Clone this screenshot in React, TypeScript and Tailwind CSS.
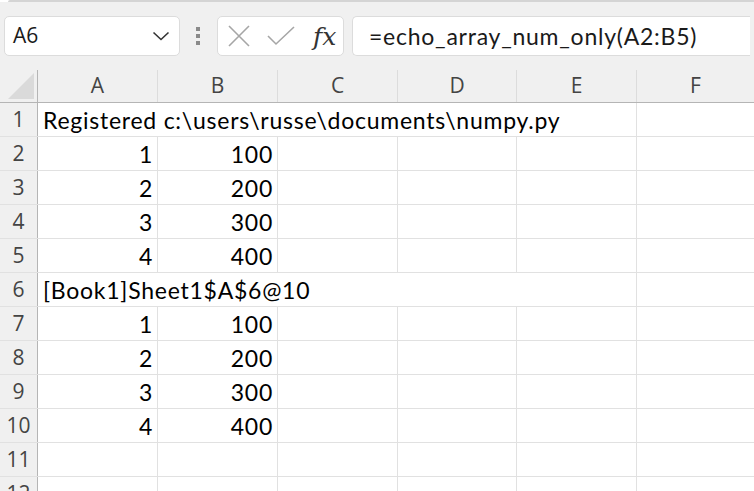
import React from 'react';

const cellFont = { fontFamily: 'Lato, "Open Sans", sans-serif', letterSpacing: '0.75px' };

type Cell = { text: string; align?: 'left' | 'right'; overflow?: boolean };

const rows: Cell[][] = [
  [{ text: 'Registered c:\\users\\russe\\documents\\numpy.py', overflow: true }],
  [{ text: '1', align: 'right' }, { text: '100', align: 'right' }],
  [{ text: '2', align: 'right' }, { text: '200', align: 'right' }],
  [{ text: '3', align: 'right' }, { text: '300', align: 'right' }],
  [{ text: '4', align: 'right' }, { text: '400', align: 'right' }],
  [{ text: '[Book1]Sheet1$A$6@10', overflow: true }],
  [{ text: '1', align: 'right' }, { text: '100', align: 'right' }],
  [{ text: '2', align: 'right' }, { text: '200', align: 'right' }],
  [{ text: '3', align: 'right' }, { text: '300', align: 'right' }],
  [{ text: '4', align: 'right' }, { text: '400', align: 'right' }],
  [],
  [],
];

const columns = ['A', 'B', 'C', 'D', 'E', 'F'];
const colWidths = ['w-[120px]', 'w-[120px]', 'w-[120px]', 'w-[119px]', 'w-[120px]', 'flex-1'];

const FormulaBar: React.FC = () => (
  <div className="flex items-center h-[68px] px-[4px] bg-[#f0f0f0]">
    {/* Name box */}
    <div className="flex items-center justify-between w-[176px] h-[40px] bg-white border border-[#dcdcdc] rounded-[5px] pl-[8px] pr-[8px]">
      <span className="text-[21px] text-[#1a1a1a]" style={{ fontFamily: '"Open Sans", sans-serif' }}>A6</span>
      <svg width="18" height="10" viewBox="0 0 18 10" className="mr-[1px]">
        <path d="M1.5 1.5 L9 8.5 L16.5 1.5" fill="none" stroke="#333" strokeWidth="1.6" />
      </svg>
    </div>
    {/* Separator dots */}
    <div className="flex flex-col gap-[3px] ml-[16px] mr-[17px]">
      <div className="w-[4px] h-[4px] bg-[#8a8a8a]" />
      <div className="w-[4px] h-[4px] bg-[#8a8a8a]" />
      <div className="w-[4px] h-[4px] bg-[#8a8a8a]" />
    </div>
    {/* Buttons */}
    <div className="flex items-center w-[127px] h-[40px] bg-white border border-[#dcdcdc] rounded-[5px] pl-[9px]">
      <svg width="24" height="24" viewBox="0 0 24 24">
        <path d="M2 2 L22 22 M22 2 L2 22" stroke="#a6a6a6" strokeWidth="1.6" fill="none" />
      </svg>
      <svg width="28" height="20" viewBox="0 0 28 20" className="ml-[16px]">
        <path d="M1 10 L9 18 L27 1" stroke="#a6a6a6" strokeWidth="1.6" fill="none" />
      </svg>
      <span
        className="ml-[18px] text-[25px] italic text-[#333] leading-none"
        style={{ fontFamily: '"DejaVu Serif", serif' }}
      >
        fx
      </span>
    </div>
    {/* Formula input */}
    <div className="flex items-center flex-1 h-[40px] ml-[8px] bg-white border border-r-0 border-[#dcdcdc] rounded-l-[5px] pl-[16px]">
      <span className="text-[23px] text-[#1a1a1a]" style={cellFont}>=echo_array_num_only(A2:B5)</span>
    </div>
  </div>
);

export default function App() {
  return (
    <div className="w-[754px] h-[491px] overflow-hidden bg-white select-none">
      <div className="h-[2px] bg-[#d4d4d4] rounded-tl-[6px] ml-[8px]" />
      <FormulaBar />

      {/* Column headers */}
      <div className="flex h-[33px] bg-[#f0f0f0] border-b border-[#b5b5b5]">
        <div className="w-[38px] flex items-end justify-end border-r border-[#b5b5b5] pr-[3px] pb-[3px]">
          <div className="w-0 h-0 border-l-[26px] border-l-transparent border-b-[26px] border-b-[#dadada]" />
        </div>
        {columns.map((c, i) => (
          <div
            key={c}
            className={`${colWidths[i]} flex items-center justify-center text-[21px] text-[#444] ${i < 5 ? 'border-r border-[#dcdcdc]' : ''}`}
            style={{ fontFamily: '"Open Sans", sans-serif' }}
          >
            {c}
          </div>
        ))}
      </div>

      {/* Rows */}
      {rows.map((row, r) => (
        <div key={r} className="flex h-[34px] border-b border-[#e1e1e1]">
          <div
            className="w-[38px] flex items-center justify-center bg-[#f0f0f0] border-r border-[#b5b5b5] text-[21px] text-[#444]"
            style={{ fontFamily: '"Open Sans", sans-serif' }}
          >
            {r + 1}
          </div>
          {columns.map((c, i) => {
            const cell = row[i];
            const overflowing = row[0]?.overflow;
            const showBorder = i < 5 && !(overflowing && i < 4);
            return (
              <div
                key={c}
                className={`${colWidths[i]} relative flex items-end pl-[5px] pr-[4px] pb-[1px] ${cell?.align === 'right' ? 'justify-end' : 'justify-start'} ${showBorder ? 'border-r border-[#e1e1e1]' : ''}`}
              >
                {cell && (
                  <span
                    className={`text-[23px] text-black leading-[30px] whitespace-nowrap ${cell.overflow ? 'absolute left-[5px] bottom-[1px]' : ''}`}
                    style={cellFont}
                  >
                    {cell.text}
                  </span>
                )}
              </div>
            );
          })}
        </div>
      ))}
    </div>
  );
}
